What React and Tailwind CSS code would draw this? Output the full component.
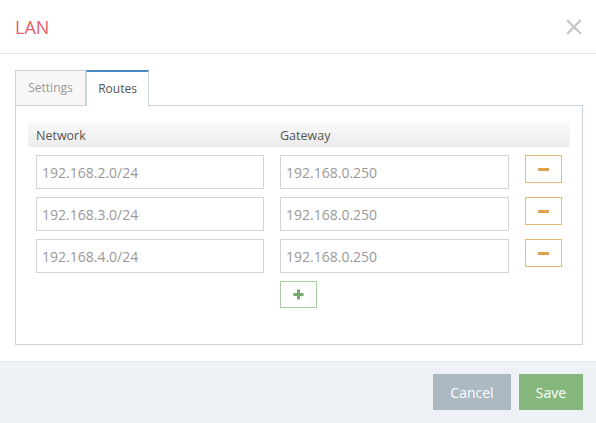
export default function App() {
  const routes = [
    { network: "192.168.2.0/24", gateway: "192.168.0.250" },
    { network: "192.168.3.0/24", gateway: "192.168.0.250" },
    { network: "192.168.4.0/24", gateway: "192.168.0.250" },
  ];

  return (
    <div className="w-[596px] h-[423px] bg-white flex flex-col font-['Open_Sans',sans-serif] overflow-hidden">
      {/* Modal header */}
      <div className="h-[54px] border-b border-[#e5e5e5] flex items-center justify-between pl-[15px] pr-[14px] shrink-0">
        <h3 className="text-[18px] leading-none text-[#e5606e] font-normal">LAN</h3>
        <button className="w-[16px] h-[16px] flex items-center justify-center">
          <svg width="16" height="16" viewBox="0 0 16 16">
            <path d="M2 2 L14 14 M14 2 L2 14" stroke="#c8c8c8" strokeWidth="2.4" strokeLinecap="square" />
          </svg>
        </button>
      </div>

      {/* Modal body */}
      <div className="pl-[15px] pr-[13px] pt-[15px] pb-[16px] shrink-0">
        {/* Tabs */}
        <div className="flex items-end h-[36px]">
          <div className="h-[35px] w-[71px] border border-b-0 border-[#c9d3dc] bg-[#f7f7f7] flex items-center justify-center text-[12px] text-[#999]">
            Settings
          </div>
          <div className="h-[36px] w-[63px] border border-b-0 border-[#c9d3dc] border-t-2 border-t-[#4a8bbf] bg-white flex items-center justify-center text-[12px] text-[#555] -mb-px relative z-10">
            Routes
          </div>
        </div>

        {/* Tab panel */}
        <div className="h-[240px] border border-[#c9d3dc] px-[12px] pt-[16px]">
          <div className="h-[25px] px-2 bg-gradient-to-b from-[#fafafa] to-[#ececec] grid grid-cols-[228px_229px_37px] gap-x-4 items-end pb-[2px]">
            <span className="text-[12.5px] text-[#555] leading-[18px]">Network</span>
            <span className="text-[12.5px] text-[#555] leading-[18px]">Gateway</span>
            <span />
          </div>

          <div className="px-2 pt-2 flex flex-col gap-2">
            {routes.map((r, i) => (
              <div key={i} className="grid grid-cols-[228px_229px_37px] gap-x-4 items-start">
                <div className="h-[34px] border border-[#d5d5d5] flex items-center px-[5px] text-[14px] text-[#999]">
                  {r.network}
                </div>
                <div className="h-[34px] border border-[#d5d5d5] flex items-center px-[5px] text-[14px] text-[#999]">
                  {r.gateway}
                </div>
                <button className="h-[28px] w-[37px] border border-[#e6b870] flex items-center justify-center">
                  <span className="block w-[11px] h-[3px] bg-[#dca24f]" />
                </button>
              </div>
            ))}
            <div className="grid grid-cols-[228px_229px_37px] gap-x-4">
              <span />
              <button className="h-[27px] w-[37px] border border-[#a6cf9f] flex items-center justify-center">
                <svg width="11" height="11" viewBox="0 0 11 11">
                  <path d="M5.5 0.5 V10.5 M0.5 5.5 H10.5" stroke="#78a872" strokeWidth="3" />
                </svg>
              </button>
            </div>
          </div>
        </div>
      </div>

      {/* Modal footer */}
      <div className="flex-1 bg-[#eef1f5] border-t border-[#e3e7ec] flex justify-end items-start pt-[12px] pr-[13px] gap-2">
        <button className="h-[36px] w-[78px] bg-[#abb9c3] text-white text-[14px]">Cancel</button>
        <button className="h-[36px] w-[64px] bg-[#86b87e] text-white text-[14px]">Save</button>
      </div>
    </div>
  );
}
